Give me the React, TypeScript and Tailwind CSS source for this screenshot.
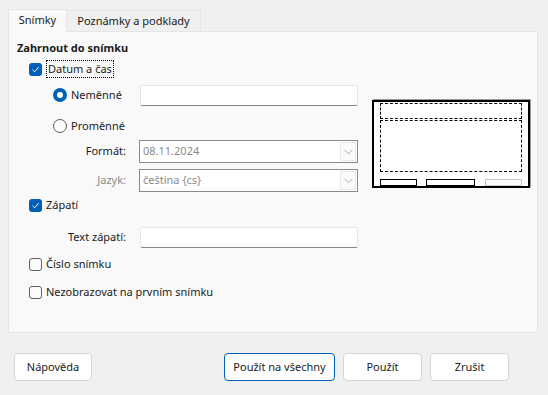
import React from 'react';

const font = { fontFamily: '"Noto Sans", "Liberation Sans", sans-serif' };

const Check: React.FC<{ checked?: boolean }> = ({ checked }) =>
  checked ? (
    <span className="w-[13px] h-[13px] rounded-[3px] bg-[#005fb8] flex items-center justify-center shrink-0">
      <svg width="9" height="9" viewBox="0 0 9 9">
        <path d="M1.5 4.8 L3.6 6.8 L7.6 2.2" fill="none" stroke="#fff" strokeWidth="1" />
      </svg>
    </span>
  ) : (
    <span className="w-[13px] h-[13px] rounded-[3px] border border-[#5f5f5f] bg-[#fbfbfb] shrink-0" />
  );

const Radio: React.FC<{ checked?: boolean }> = ({ checked }) =>
  checked ? (
    <span className="w-[14px] h-[14px] rounded-full bg-[#005fb8] flex items-center justify-center shrink-0">
      <span className="w-[6px] h-[6px] rounded-full bg-white" />
    </span>
  ) : (
    <span className="w-[14px] h-[14px] rounded-full border border-[#5f5f5f] bg-[#fbfbfb] shrink-0" />
  );

const TextBox: React.FC = () => (
  <div className="w-[218px] h-[21px] bg-white border border-[#e5e5e5] border-b-[#868686] rounded-[2px]" />
);

const Select: React.FC<{ value: string }> = ({ value }) => (
  <div className="w-[219px] h-[23px] bg-white border border-[#868a90] flex items-center justify-between pl-[3px] pr-[1px]">
    <span className="text-[#8b8b8b]">{value}</span>
    <span className="w-[16px] h-[19px] border border-[#e8e8e8] bg-[#fbfbfb] flex items-center justify-center">
      <svg width="9" height="6" viewBox="0 0 9 6">
        <path d="M0.5 0.8 L4.5 4.8 L8.5 0.8" fill="none" stroke="#a8a8a8" strokeWidth="1" />
      </svg>
    </span>
  </div>
);

const Btn: React.FC<{ label: string; w: string; primary?: boolean }> = ({ label, w, primary }) => (
  <div
    className={`${w} h-[28px] rounded-[4px] bg-white flex items-center justify-center text-[#1b1b1b] ${
      primary ? 'border border-[#005fb8]' : 'border border-[#d5d5d5]'
    }`}
  >
    {label}
  </div>
);

export default function App() {
  return (
    <div className="w-[548px] h-[395px] bg-[#f0f0f0] text-[11px] text-[#1b1b1b] relative" style={font}>
      <div className="pt-[8px] px-[8px]">
        {/* Tabs */}
        <div className="flex items-end h-[23px]">
          <div className="w-[59px] h-[23px] bg-[#f9f9f9] border border-[#e5e5e5] border-b-0 flex items-center justify-center relative z-10 -mb-px pb-[1px]">
            Snímky
          </div>
          <div className="w-[134px] h-[21px] bg-[#f0f0f0] border border-[#e5e5e5] border-b-0 border-l-0 flex items-center justify-center">
            Poznámky a podklady
          </div>
        </div>
        {/* Panel */}
        <div className="w-[530px] h-[302px] bg-[#f9f9f9] border border-[#e5e5e5] pl-[8px] pt-[8px] flex">
          <div className="w-[355px]">
            <div className="font-bold h-[16px] leading-[16px]">Zahrnout do snímku</div>
            <div className="flex items-center gap-[4px] h-[20px] pl-[12px] mt-[3px]">
              <Check checked />
              <span className="border border-dotted border-black px-[1px] leading-[16px]">Datum a čas</span>
            </div>
            <div className="flex items-center h-[22px] pl-[36px] mt-[5px]">
              <Radio checked />
              <span className="ml-[4px] w-[69px]">Neměnné</span>
              <TextBox />
            </div>
            <div className="flex items-center h-[20px] pl-[36px] mt-[10px]">
              <Radio />
              <span className="ml-[4px]">Proměnné</span>
            </div>
            <div className="flex items-center h-[23px] mt-[4px]">
              <span className="w-[109px] text-right">Formát:</span>
              <span className="w-[13px]" />
              <Select value="08.11.2024" />
            </div>
            <div className="flex items-center h-[23px] mt-[6px]">
              <span className="w-[109px] text-right text-[#8b8b8b]">Jazyk:</span>
              <span className="w-[13px]" />
              <Select value="čeština {cs}" />
            </div>
            <div className="flex items-center gap-[4px] h-[20px] pl-[12px] mt-[3px]">
              <Check checked />
              <span>Zápatí</span>
            </div>
            <div className="flex items-center h-[22px] mt-[11px]">
              <span className="w-[109px] text-right">Text zápatí:</span>
              <span className="w-[14px]" />
              <TextBox />
            </div>
            <div className="flex items-center gap-[4px] h-[20px] pl-[12px] mt-[6px]">
              <Check />
              <span>Číslo snímku</span>
            </div>
            <div className="flex items-center gap-[4px] h-[20px] pl-[12px] mt-[8px]">
              <Check />
              <span>Nezobrazovat na prvním snímku</span>
            </div>
          </div>
          {/* Preview */}
          <div className="pt-[60px]">
            <div className="w-[158px] h-[88px] bg-white border-2 border-black shadow-[1px_-1px_0_#9a9a9a] px-[6px] pt-[1px] flex flex-col">
              <div className="h-[16px] border border-dashed border-black" />
              <div className="h-[52px] border border-dashed border-black mt-[1px]" />
              <div className="flex mt-[7px]">
                <div className="w-[37px] h-[7px] border border-black" />
                <div className="w-[49px] h-[7px] border border-black ml-[9px]" />
                <div className="w-[37px] h-[7px] border border-[#c8c8c8] ml-[10px]" />
              </div>
            </div>
          </div>
        </div>
      </div>
      {/* Buttons */}
      <div className="flex items-center px-[14px] mt-[20px]">
        <Btn label="Nápověda" w="w-[78px]" />
        <div className="flex-1" />
        <Btn label="Použít na všechny" w="w-[111px]" primary />
        <div className="w-[8px]" />
        <Btn label="Použít" w="w-[79px]" />
        <div className="w-[8px]" />
        <Btn label="Zrušit" w="w-[79px]" />
        <div className="w-[25px]" />
      </div>
    </div>
  );
}
